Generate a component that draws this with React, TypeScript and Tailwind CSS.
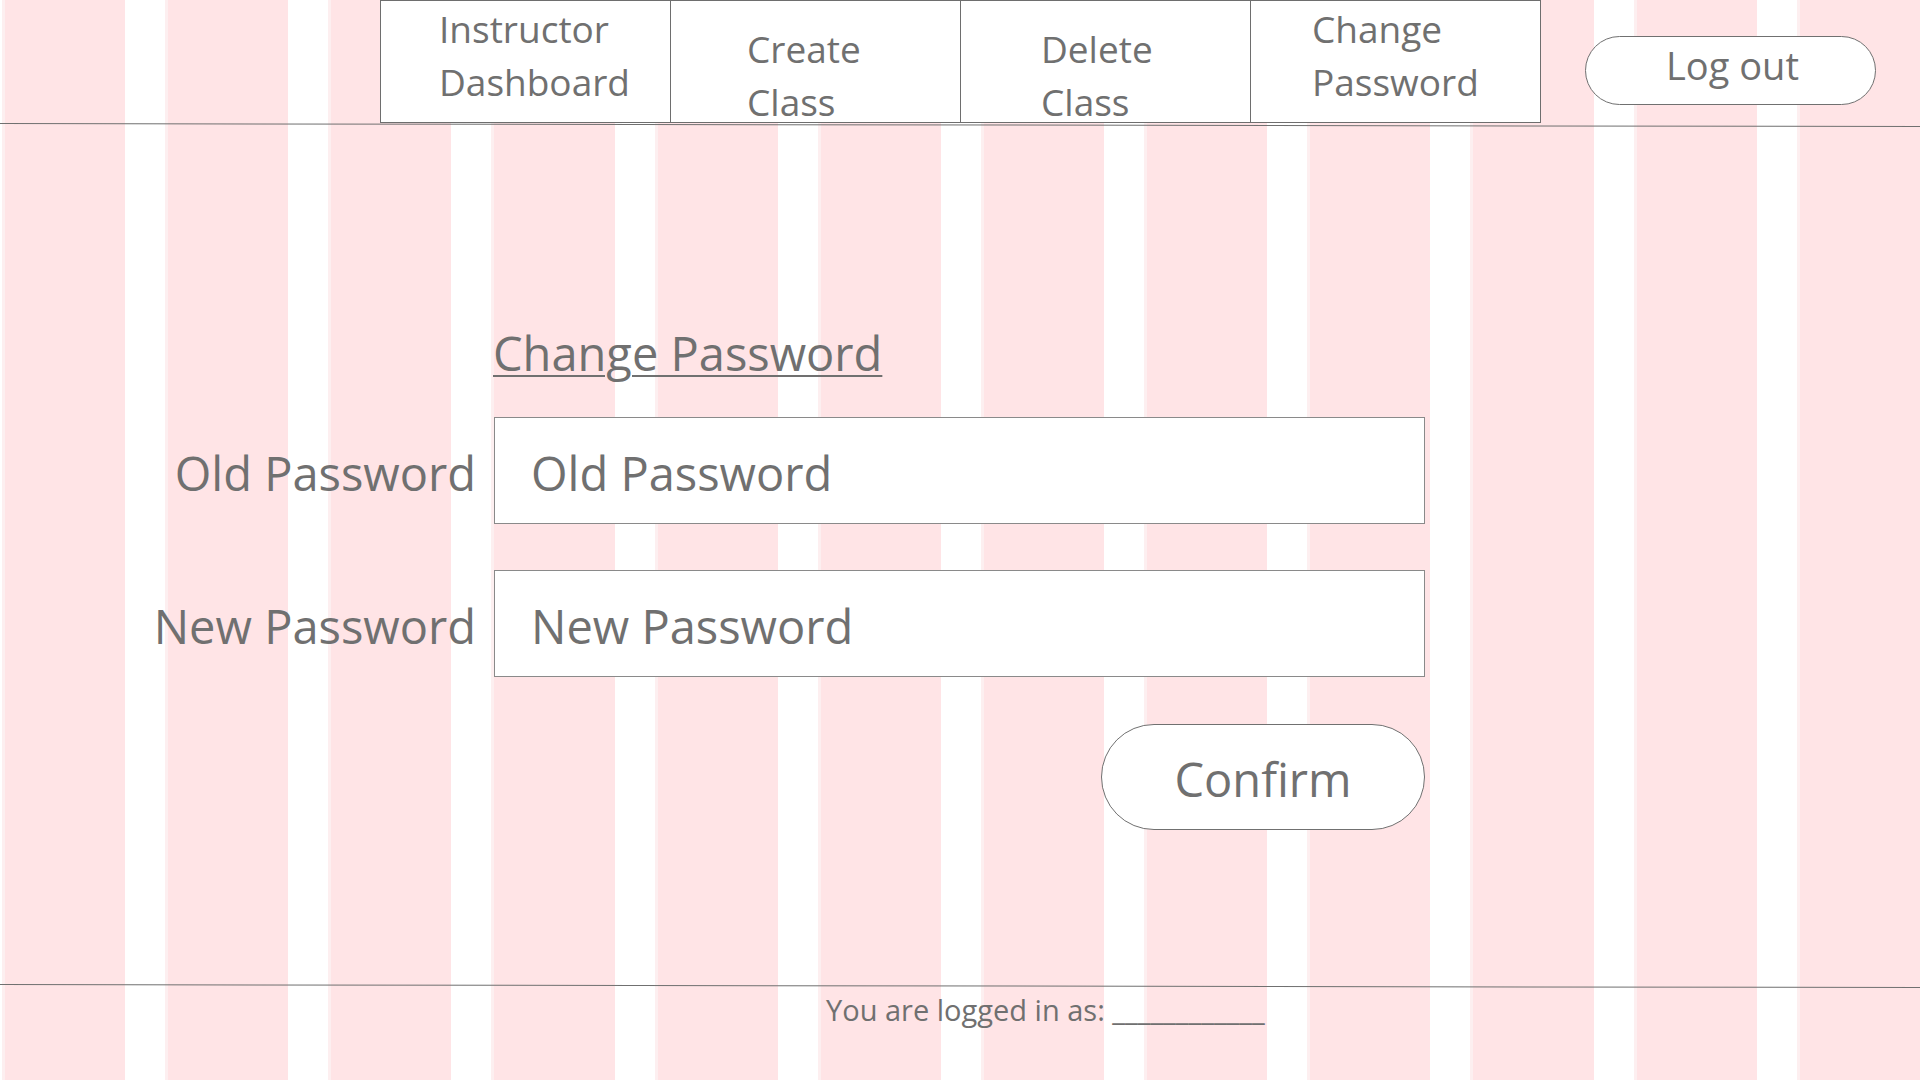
import React from "react";

const navItems = [
  { lines: ["Instructor", "Dashboard"], pl: "pl-[58px]", pt: "pt-[1px]" },
  { lines: ["Create", "Class"], pl: "pl-[76px]", pt: "pt-[21px]" },
  { lines: ["Delete", "Class"], pl: "pl-[80px]", pt: "pt-[21px]" },
  { lines: ["Change", "Password"], pl: "pl-[61px]", pt: "pt-[1px]" },
];

export default function App() {
  return (
    <div className="relative h-[1080px] w-full overflow-hidden bg-white font-['Open_Sans',sans-serif] text-[#707070]">
      {/* layout grid background */}
      <div className="pointer-events-none absolute inset-0 grid grid-cols-12 gap-x-[40px] pl-[2px]">
        {Array.from({ length: 12 }).map((_, i) => (
          <div key={i} className="border-l-[3px] border-[#fdeff0] bg-[#ffe4e6]" />
        ))}
      </div>

      <div className="relative flex h-full flex-col">
        {/* header */}
        <header className="flex h-[123px] items-start">
          <nav className="ml-[380px] flex h-[123px] border border-r-0 border-[#6e6e6e] bg-white">
            {navItems.map((item, i) => (
              <div
                key={i}
                className={`h-full w-[290px] border-r border-[#6e6e6e] bg-white text-[37px] leading-[53px] ${item.pl} ${item.pt}`}
              >
                {item.lines.map((l, j) => (
                  <div key={l} className={`whitespace-nowrap ${j === 1 ? "h-[44px]" : ""}`}>
                    {l}
                  </div>
                ))}
              </div>
            ))}
          </nav>
          <button className="ml-[44px] mt-[36px] flex h-[69px] w-[291px] items-center justify-center rounded-full border border-[#707070] bg-white pb-[12px] pl-[4px] text-[38px] leading-[48px] text-[#707070]">
            Log out
          </button>
        </header>
        <div className="h-px w-full origin-left rotate-[0.09deg] bg-[#707070]" />

        {/* main */}
        <main className="flex flex-1 flex-col">
          <div className="ml-[493px] mt-[199px] text-[47px] leading-[60px] underline decoration-2 underline-offset-[4px]">
            Change Password
          </div>

          <div className="mt-[34px] flex items-center">
            <label className="w-[476px] pt-[5px] text-right text-[47px] leading-[60px]">Old Password</label>
            <input
              readOnly
              placeholder="Old Password"
              className="ml-[18px] h-[107px] w-[931px] border border-[#8a8a8a] bg-white pl-[36px] pt-[5px] text-[47px] text-[#707070] outline-none placeholder:text-[#707070]"
            />
          </div>

          <div className="mt-[46px] flex items-center">
            <label className="w-[476px] pt-[5px] text-right text-[47px] leading-[60px]">New Password</label>
            <input
              readOnly
              placeholder="New Password"
              className="ml-[18px] h-[107px] w-[931px] border border-[#8a8a8a] bg-white pl-[36px] pt-[5px] text-[47px] text-[#707070] outline-none placeholder:text-[#707070]"
            />
          </div>

          <div className="mt-[47px] flex w-[1425px] justify-end">
            <button className="flex h-[106px] w-[324px] items-center justify-center rounded-full border border-[#707070] bg-white pt-[4px] text-[47px] leading-[60px] text-[#707070]">
              Confirm
            </button>
          </div>
        </main>

        {/* footer */}
        <footer className="h-[96px]">
          <div className="h-px w-full origin-left rotate-[0.09deg] bg-[#707070]" />
          <div className="pl-[826px] pt-[6px] text-[29px] leading-[38px] whitespace-nowrap">
            You are logged in as: ____________
          </div>
        </footer>
      </div>
    </div>
  );
}
